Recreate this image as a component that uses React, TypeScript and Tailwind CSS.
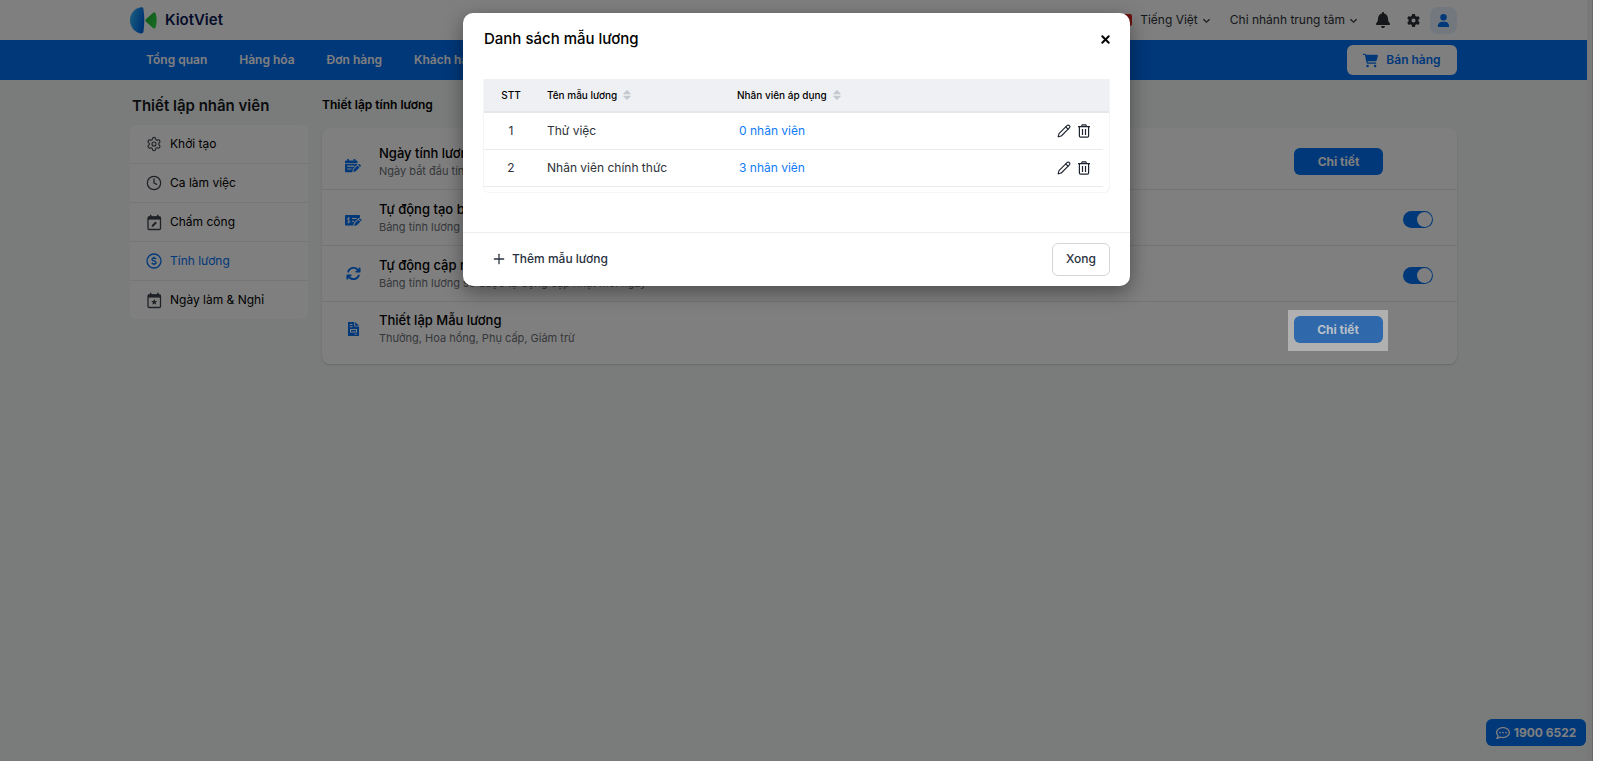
import React from "react";
import { Clock, Pencil, Plus, Settings, X } from "lucide-react";
import {
  FaArrowsRotate,
  FaBell,
  FaCartShopping,
  FaChevronDown,
  FaGear,
  FaRegCommentDots,
  FaUser,
} from "react-icons/fa6";

function Logo() {
  return (
    <svg viewBox="0 0 27 27" className="h-[27px] w-[27px]" aria-hidden="true">
      <defs>
        <linearGradient id="logo-blue" x1="0" y1="0" x2="1" y2="0.4">
          <stop offset="0" stopColor="#38c4ff" />
          <stop offset="1" stopColor="#0068e8" />
        </linearGradient>
        <linearGradient id="logo-green" x1="0" y1="0" x2="1" y2="1">
          <stop offset="0" stopColor="#1fae2c" />
          <stop offset="1" stopColor="#2fe04c" />
        </linearGradient>
      </defs>
      <path
        fill="url(#logo-blue)"
        d="M11.3.3C5 .8 0 6.500 0 13.300s5 12.600 11.100 13.100c1.200.1 2-.4 2.300-1.400 1.200-7.300 1.200-16 0-23.300C13.100.7 12.400.2 11.300.3z"
      />
      <path
        fill="url(#logo-green)"
        d="M15.900 12.200l7-6.300c1-.9 2.300-.7 2.700.5 1.500 4.300 1.500 9.600 0 14-.4 1.200-1.700 1.500-2.700.6l-7-6.400c-.7-.7-.7-1.700 0-2.400z"
      />
    </svg>
  );
}

function CalendarFrame() {
  return (
    <>
      <rect x="1" y="3" width="12.500" height="12.500" rx="1.200" stroke="currentColor" strokeWidth="1.300" />
      <path d="M1 2.600h12.500v3H1z" fill="currentColor" />
      <path d="M3.700 .8v2.500M10.800 .8v2.500" stroke="currentColor" strokeWidth="1.500" />
    </>
  );
}

function CalendarEditIcon() {
  return (
    <svg viewBox="0 0 15 17" className="h-[17px] w-[15px]" fill="none" aria-hidden="true">
      <CalendarFrame />
      <path d="M5.400 12l3.800-3.800" stroke="currentColor" strokeWidth="2" />
      <path d="M4.600 13l.4-1.800 1.400 1.400z" fill="currentColor" />
    </svg>
  );
}

function CalendarStarIcon() {
  return (
    <svg viewBox="0 0 15 17" className="h-[17px] w-[15px]" fill="none" aria-hidden="true">
      <CalendarFrame />
      <path
        d="M7.250 7l.9 2 2.100.2-1.600 1.400.5 2.100-1.900-1.100-1.900 1.100.5-2.100-1.600-1.400 2.100-.2z"
        fill="currentColor"
      />
    </svg>
  );
}

function DollarCircleIcon() {
  return (
    <svg viewBox="0 0 16 16" className="h-4 w-4 shrink-0" fill="none" stroke="currentColor" aria-hidden="true">
      <circle cx="8" cy="8" r="7" strokeWidth="1.300" />
      <path d="M10 6.200C9.700 5.300 9 5 8 5 6.800 5 6 5.500 6 6.400 6 8.500 10.100 7.300 10.100 9.600 10.100 10.500 9.200 11 8 11c-1.100 0-1.900-.4-2.200-1.300M8 3.700V5M8 11v1.300" strokeWidth="1.300" />
    </svg>
  );
}

function CalendarPenIcon() {
  return (
    <svg viewBox="0 0 16 14" className="h-[14px] w-[16px]" aria-hidden="true">
      <path d="M2.300 0h1.700v1.400h4.600V0h1.700v1.400h1.200c.6 0 1 .4 1 1V4H0V2.400c0-.6.4-1 1-1h1.300z" fill="currentColor" />
      <path
        fillRule="evenodd"
        d="M0 4.700h12.500v.5L8 9.700 7.200 13.300H1c-.6 0-1-.4-1-1zM2.200 6.500v1.200h7.300V6.500zM2.200 9.400v1.200h4.200V9.400z"
        fill="currentColor"
      />
      <path d="M8.800 10.200l3.700-3.700 2 2-3.700 3.700-2.600.8zM13.100 5.900l.6-.6c.3-.3.7-.3 1 0l1 1c.3.3.3.7 0 1l-.6.6z" fill="currentColor" />
    </svg>
  );
}

function MoneyPenIcon() {
  return (
    <svg viewBox="0 0 17 12" className="h-[12px] w-[17px]" aria-hidden="true">
      <path
        fillRule="evenodd"
        d="M1 0h13c.6 0 1 .4 1 1v1.700l-1.200.2L8.900 7.800 8.200 10.400H1c-.6 0-1-.4-1-1V1c0-.6.4-1 1-1zM7 3v1.100h4.600V3zM7 5.700v1.100h2.200V5.700z"
        fill="currentColor"
      />
      <path
        d="M5 3.500C4.700 3 2.300 2.700 2.300 4S5 5 5 6.500 2.500 7.500 2.100 6.800M3.600 2v6.500"
        stroke="#fff"
        strokeWidth=".8"
        fill="none"
      />
      <path d="M9.800 8.300l3.500-3.500 2 2-3.500 3.500-2.600.8zM13.900 4.200l.5-.5c.3-.3.7-.3 1 0l1 1c.3.3.3.7 0 1l-.5.5z" fill="currentColor" />
    </svg>
  );
}

function FileIcon() {
  return (
    <svg viewBox="0 0 11 14" className="h-[14px] w-[11px]" aria-hidden="true">
      <path
        fillRule="evenodd"
        d="M0 0h6.200v4.600H11V14H0zM1.800 2v1h2.700V2zM1.800 4.200v1h2.700v-1zM2 6.900v3.600h7V6.900zM6.500 11.800v.8H9.200v-.8zM3 7.900h5v1.600H3z"
        fill="currentColor"
      />
      <path d="M7.100 0L11 3.800H7.100z" fill="currentColor" />
    </svg>
  );
}

function TrashIcon() {
  return (
    <svg viewBox="0 0 12 14" className="h-[14px] w-[12px]" fill="none" stroke="currentColor" aria-hidden="true">
      <path d="M0 2.700h12M3.300 2.500L4.300.8h3.400l1 1.700" strokeWidth="1.200" />
      <path d="M1.400 3v9c0 .7.5 1.200 1.200 1.200h6.800c.7 0 1.200-.5 1.200-1.200V3M4.500 5v6M7.500 5v6" strokeWidth="1.200" />
    </svg>
  );
}

function SortIcon() {
  return (
    <svg viewBox="0 0 8 10" className="h-[10px] w-[8px] text-[#c3c9d0]" fill="currentColor" aria-hidden="true">
      <path d="M4 0l3.600 3.400c.3.400.1.900-.4.900H.8c-.5 0-.7-.5-.4-.9zM4 10l3.600-3.400c.3-.4.1-.9-.4-.9H.8c-.5 0-.7.5-.4.900z" />
    </svg>
  );
}

const navItems = ["Tổng quan", "Hàng hóa", "Đơn hàng", "Khách hàng"];

const sideItems = [
  { label: "Khởi tạo", icon: <Settings size={16} strokeWidth={1.7} />, active: false },
  { label: "Ca làm việc", icon: <Clock size={16} strokeWidth={1.9} />, active: false },
  { label: "Chấm công", icon: <CalendarEditIcon />, active: false },
  { label: "Tính lương", icon: <DollarCircleIcon />, active: true },
  { label: "Ngày làm & Nghỉ", icon: <CalendarStarIcon />, active: false },
];

const templates = [
  { name: "Thử việc", count: 0 },
  { name: "Nhân viên chính thức", count: 3 },
];

function SettingText({ title, note }: { title: string; note: string }) {
  return (
    <div className="flex-1">
      <h3 className="text-[13px] leading-[18px] font-medium text-black">{title}</h3>
      <p className="text-[11px] leading-[18px] text-[#6b6f76]">{note}</p>
    </div>
  );
}

function IconSlot({ children }: { children: React.ReactNode }) {
  return (
    <span className="flex w-[57px] shrink-0 items-center justify-center pl-[5px] text-[#0070f4]">{children}</span>
  );
}

function Toggle({ label }: { label: string }) {
  return (
    <input
      type="checkbox"
      role="switch"
      defaultChecked
      aria-label={label}
      className="mt-[3px] mr-6 flex h-[17px] w-[30px] shrink-0 appearance-none items-center justify-end rounded-full bg-[#0070f4] px-px before:h-[15px] before:w-[15px] before:rounded-full before:bg-white"
    />
  );
}

function Header() {
  return (
    <header className="flex h-10 items-center bg-white px-[130px]">
      <a href="#" className="flex items-center gap-2">
        <Logo />
        <span className="text-[15px] font-semibold text-[#0b1a56]">KiotViet</span>
      </a>
      <div className="ml-auto flex items-center text-[12px] text-[#2b2f36]">
        <button type="button" className="flex items-center">
          <span className="mr-2 h-[12px] w-[18px] rounded-[2px] bg-[#d8241c]" />
          Tiếng Việt
          <FaChevronDown size={7} strokeWidth={40} stroke="currentColor" className="ml-[5px]" />
        </button>
        <button type="button" className="ml-5 flex items-center">
          Chi nhánh trung tâm
          <FaChevronDown size={7} strokeWidth={40} stroke="currentColor" className="ml-[5px]" />
        </button>
        <button type="button" aria-label="Thông báo" className="ml-[18px]">
          <FaBell size={16} />
        </button>
        <button type="button" aria-label="Thiết lập" className="ml-4">
          <FaGear size={13} />
        </button>
        <button
          type="button"
          aria-label="Tài khoản"
          className="ml-[10px] flex h-[27px] w-[27px] items-center justify-center rounded-[8px] bg-[#e6f1fe] text-[#0070f4]"
        >
          <FaUser size={13} />
        </button>
      </div>
    </header>
  );
}

function NavBar() {
  return (
    <nav className="flex h-10 items-center bg-[#0070f4] px-[130px]">
      {navItems.map((item) => (
        <a key={item} href="#" className="px-4 text-[12px] font-semibold text-white">
          {item}
        </a>
      ))}
      <button
        type="button"
        className="ml-auto flex h-[30px] w-[110px] items-center justify-center gap-2 rounded-[6px] bg-white text-[12px] font-semibold text-[#0070f4]"
      >
        <FaCartShopping size={15} />
        Bán hàng
      </button>
    </nav>
  );
}

function Sidebar() {
  return (
    <aside className="w-[178px] shrink-0">
      <h1 className="ml-[2px] text-[15px] leading-[22px] font-semibold text-[#15181d]">Thiết lập nhân viên</h1>
      <ul className="mt-2 divide-y divide-[#ebedf0] rounded-[6px] bg-white">
        {sideItems.map((item) => (
          <li key={item.label}>
            <a
              href="#"
              className={
                item.active
                  ? "flex h-[38px] items-center pl-4 text-[12px] text-[#0070f4]"
                  : "flex h-[38px] items-center pl-4 text-[12px] text-black"
              }
            >
              <span
                className={
                  item.active
                    ? "mr-2 flex w-4 justify-center text-[#0070f4]"
                    : "mr-2 flex w-4 justify-center text-[#3d434c]"
                }
              >
                {item.icon}
              </span>
              {item.label}
            </a>
          </li>
        ))}
      </ul>
    </aside>
  );
}

function SettingsPanel() {
  return (
    <main className="min-w-0 flex-1">
      <h2 className="text-[12px] leading-5 font-semibold text-black">Thiết lập tính lương</h2>
      <div className="mt-[13px] rounded-[8px] bg-white shadow-[0_1px_2px_rgba(0,0,0,0.15)]">
        <section className="flex h-[62px] border-b border-[#e6e8eb] pt-4">
          <div className="flex h-9 flex-1 items-center">
            <IconSlot>
              <span className="pt-[7px]">
                <CalendarPenIcon />
              </span>
            </IconSlot>
            <SettingText title="Ngày tính lương" note="Ngày bắt đầu tính lương" />
          </div>
          <button
            type="button"
            className="mt-1 mr-[74px] h-[27px] w-[89px] rounded-[6px] bg-[#0070f4] text-[12px] font-bold text-white"
          >
            Chi tiết
          </button>
        </section>
        <section className="flex h-[56px] items-center border-b border-[#e6e8eb]">
          <IconSlot>
            <span className="pt-[7px]">
              <MoneyPenIcon />
            </span>
          </IconSlot>
          <SettingText title="Tự động tạo bảng tính lương" note="Bảng tính lương sẽ được tự động tạo mới" />
          <Toggle label="Tự động tạo bảng tính lương" />
        </section>
        <section className="flex h-[56px] items-center border-b border-[#e6e8eb]">
          <IconSlot>
            <FaArrowsRotate size={15} />
          </IconSlot>
          <SettingText
            title="Tự động cập nhật bảng tính lương"
            note="Bảng tính lương sẽ được tự động cập nhật mỗi ngày"
          />
          <Toggle label="Tự động cập nhật bảng tính lương" />
        </section>
        <section className="flex h-[62px] items-start pt-2">
          <div className="flex h-[38px] flex-1 items-center">
            <IconSlot>
              <FileIcon />
            </IconSlot>
            <SettingText title="Thiết lập Mẫu lương" note="Thưởng, Hoa hồng, Phụ cấp, Giảm trừ" />
          </div>
          <div className="relative z-20 mr-[69px] flex h-[41px] w-[100px] items-start justify-center bg-[#b0b0b0] pt-[6px]">
            <button
              type="button"
              className="h-[27px] w-[89px] rounded-[6px] bg-[#3069ab] text-[12px] font-bold text-[#b9c0c8]"
            >
              Chi tiết
            </button>
          </div>
        </section>
      </div>
    </main>
  );
}

function TemplateDialog() {
  return (
    <div
      role="dialog"
      aria-modal="true"
      aria-labelledby="dialog-title"
      className="w-[667px] rounded-[10px] bg-white shadow-[0_6px_20px_rgba(0,0,0,0.4)]"
    >
      <div className="flex items-center justify-between pt-4 pr-[18px] pl-[21px]">
        <h2 id="dialog-title" className="text-[15px] leading-5 font-medium text-black">
          Danh sách mẫu lương
        </h2>
        <button type="button" aria-label="Đóng" className="flex h-5 items-center text-black">
          <X size={13} strokeWidth={3.5} />
        </button>
      </div>
      <div className="mx-5 mt-[30px] mb-[39px] rounded-b-[6px] border border-t-0 border-[#f4f5f6] pb-[5px]">
        <table className="w-full table-fixed text-left">
          <colgroup>
            <col className="w-[54px]" />
            <col className="w-[190px]" />
            <col />
            <col className="w-[66px]" />
            <col className="w-[6px]" />
          </colgroup>
          <thead className="bg-[#eff0f3] text-[10px] text-black">
            <tr className="h-[33px] border-b-2 border-[#e4e6e9]">
              <th className="text-center font-medium">STT</th>
              <th className="pl-[9px] font-medium">
                <span className="flex items-center gap-[6px]">
                  Tên mẫu lương <SortIcon />
                </span>
              </th>
              <th className="pl-[9px] font-medium">
                <span className="flex items-center gap-[6px]">
                  Nhân viên áp dụng <SortIcon />
                </span>
              </th>
              <th colSpan={2} aria-label="Thao tác" />
            </tr>
          </thead>
          <tbody className="text-[12px] text-[#2d3138]">
            {templates.map((row, i) => (
              <tr key={row.name} className="h-[37px]">
                <td className="border-b border-[#e8eaec] text-center">{i + 1}</td>
                <td className="border-b border-[#e8eaec] pl-[9px]">{row.name}</td>
                <td className="border-b border-[#e8eaec] pl-[11px]">
                  <a href="#" className="text-[#0f7bf5]">
                    {row.count} nhân viên
                  </a>
                </td>
                <td className="border-b border-[#e8eaec]">
                  <span className="flex items-center justify-end gap-[7px] pr-[13px] text-[#1f2530]">
                    <button type="button" aria-label={`Sửa ${row.name}`}>
                      <Pencil size={14} strokeWidth={1.9} />
                    </button>
                    <button type="button" aria-label={`Xóa ${row.name}`}>
                      <TrashIcon />
                    </button>
                  </span>
                </td>
                <td />
              </tr>
            ))}
          </tbody>
        </table>
      </div>
      <div className="flex items-center justify-between border-t border-[#eceef0] px-5 py-[10px] text-[12px] font-medium text-[#28323e]">
        <button type="button" className="flex items-center gap-[5px] pl-2">
          <Plus size={16} strokeWidth={1.9} />
          Thêm mẫu lương
        </button>
        <button type="button" className="h-[33px] w-[58px] rounded-[6px] border border-[#d3d6da]">
          Xong
        </button>
      </div>
    </div>
  );
}

export default function App() {
  return (
    <div className="flex min-h-screen bg-[#fafafa] pr-[7px] font-['Inter','Noto_Sans',sans-serif]">
      <div className="relative flex flex-1">
        <div className="flex-1 bg-[#f4f8f6]">
          <Header />
          <NavBar />
          <div className="flex gap-[14px] px-[130px] pt-[15px]">
            <Sidebar />
            <SettingsPanel />
          </div>
        </div>
        <div className="w-[6px] border-r border-[#d0d0d0] bg-[#f0f0f0]" />
        <button
          type="button"
          className="absolute right-[7px] bottom-[15px] flex h-[27px] w-[100px] items-center justify-center gap-1 rounded-[6px] bg-[#0070f4] text-[12px] font-bold text-white"
        >
          <FaRegCommentDots size={14} />
          1900 6522
        </button>
        <div className="absolute inset-0 z-10 bg-black/50" />
        <div className="absolute inset-x-0 top-[13px] z-30 flex justify-center">
          <TemplateDialog />
        </div>
      </div>
    </div>
  );
}
